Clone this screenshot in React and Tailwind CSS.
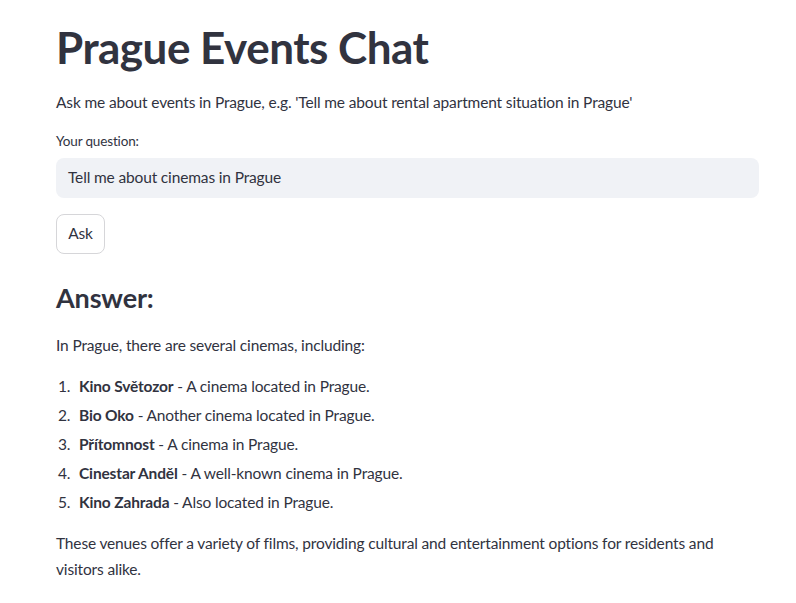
export default function App() {
  const cinemas = [
    { name: "Kino Světozor", text: "A cinema located in Prague." },
    { name: "Bio Oko", text: "Another cinema located in Prague." },
    { name: "Přítomnost", text: "A cinema in Prague." },
    { name: "Cinestar Anděl", text: "A well-known cinema in Prague." },
    { name: "Kino Zahrada", text: "Also located in Prague." },
  ];

  return (
    <div className="min-h-screen bg-white font-['Lato',sans-serif] text-[#31333f]">
      <main className="ml-[56px] w-[703px] pt-[20px] text-[15.5px] tracking-[-0.15px]">
        <h1 className="text-[44px] font-bold leading-[54px] tracking-[-0.5px]">Prague Events Chat</h1>

        <p className="mt-[15px] leading-[26px]">
          Ask me about events in Prague, e.g. 'Tell me about rental apartment situation in Prague'
        </p>

        <label className="mt-[15px] block text-[13.5px] leading-[22px]">Your question:</label>
        <div className="mt-[6px] flex h-[40px] items-center rounded-lg bg-[#f0f2f6] px-3">
          Tell me about cinemas in Prague
        </div>

        <button
          type="button"
          className="mt-[16px] flex h-[40px] w-[49px] items-center justify-center rounded-lg border border-[#d6d6d9] bg-white"
        >
          Ask
        </button>

        <h3 className="mt-[26px] text-[27px] font-bold leading-[36px]">Answer:</h3>

        <p className="mt-[16px] leading-[26px]">In Prague, there are several cinemas, including:</p>

        <ol className="mt-[15px] flex flex-col gap-[3px] leading-[26px]">
          {cinemas.map((c, i) => (
            <li key={c.name} className="flex">
              <span className="w-[23px] pl-[2px]">{i + 1}.</span>
              <span>
                <strong className="font-bold">{c.name}</strong> - {c.text}
              </span>
            </li>
          ))}
        </ol>

        <p className="mt-[15px] leading-[26px]">
          These venues offer a variety of films, providing cultural and entertainment options for residents and
          visitors alike.
        </p>
      </main>
    </div>
  );
}
